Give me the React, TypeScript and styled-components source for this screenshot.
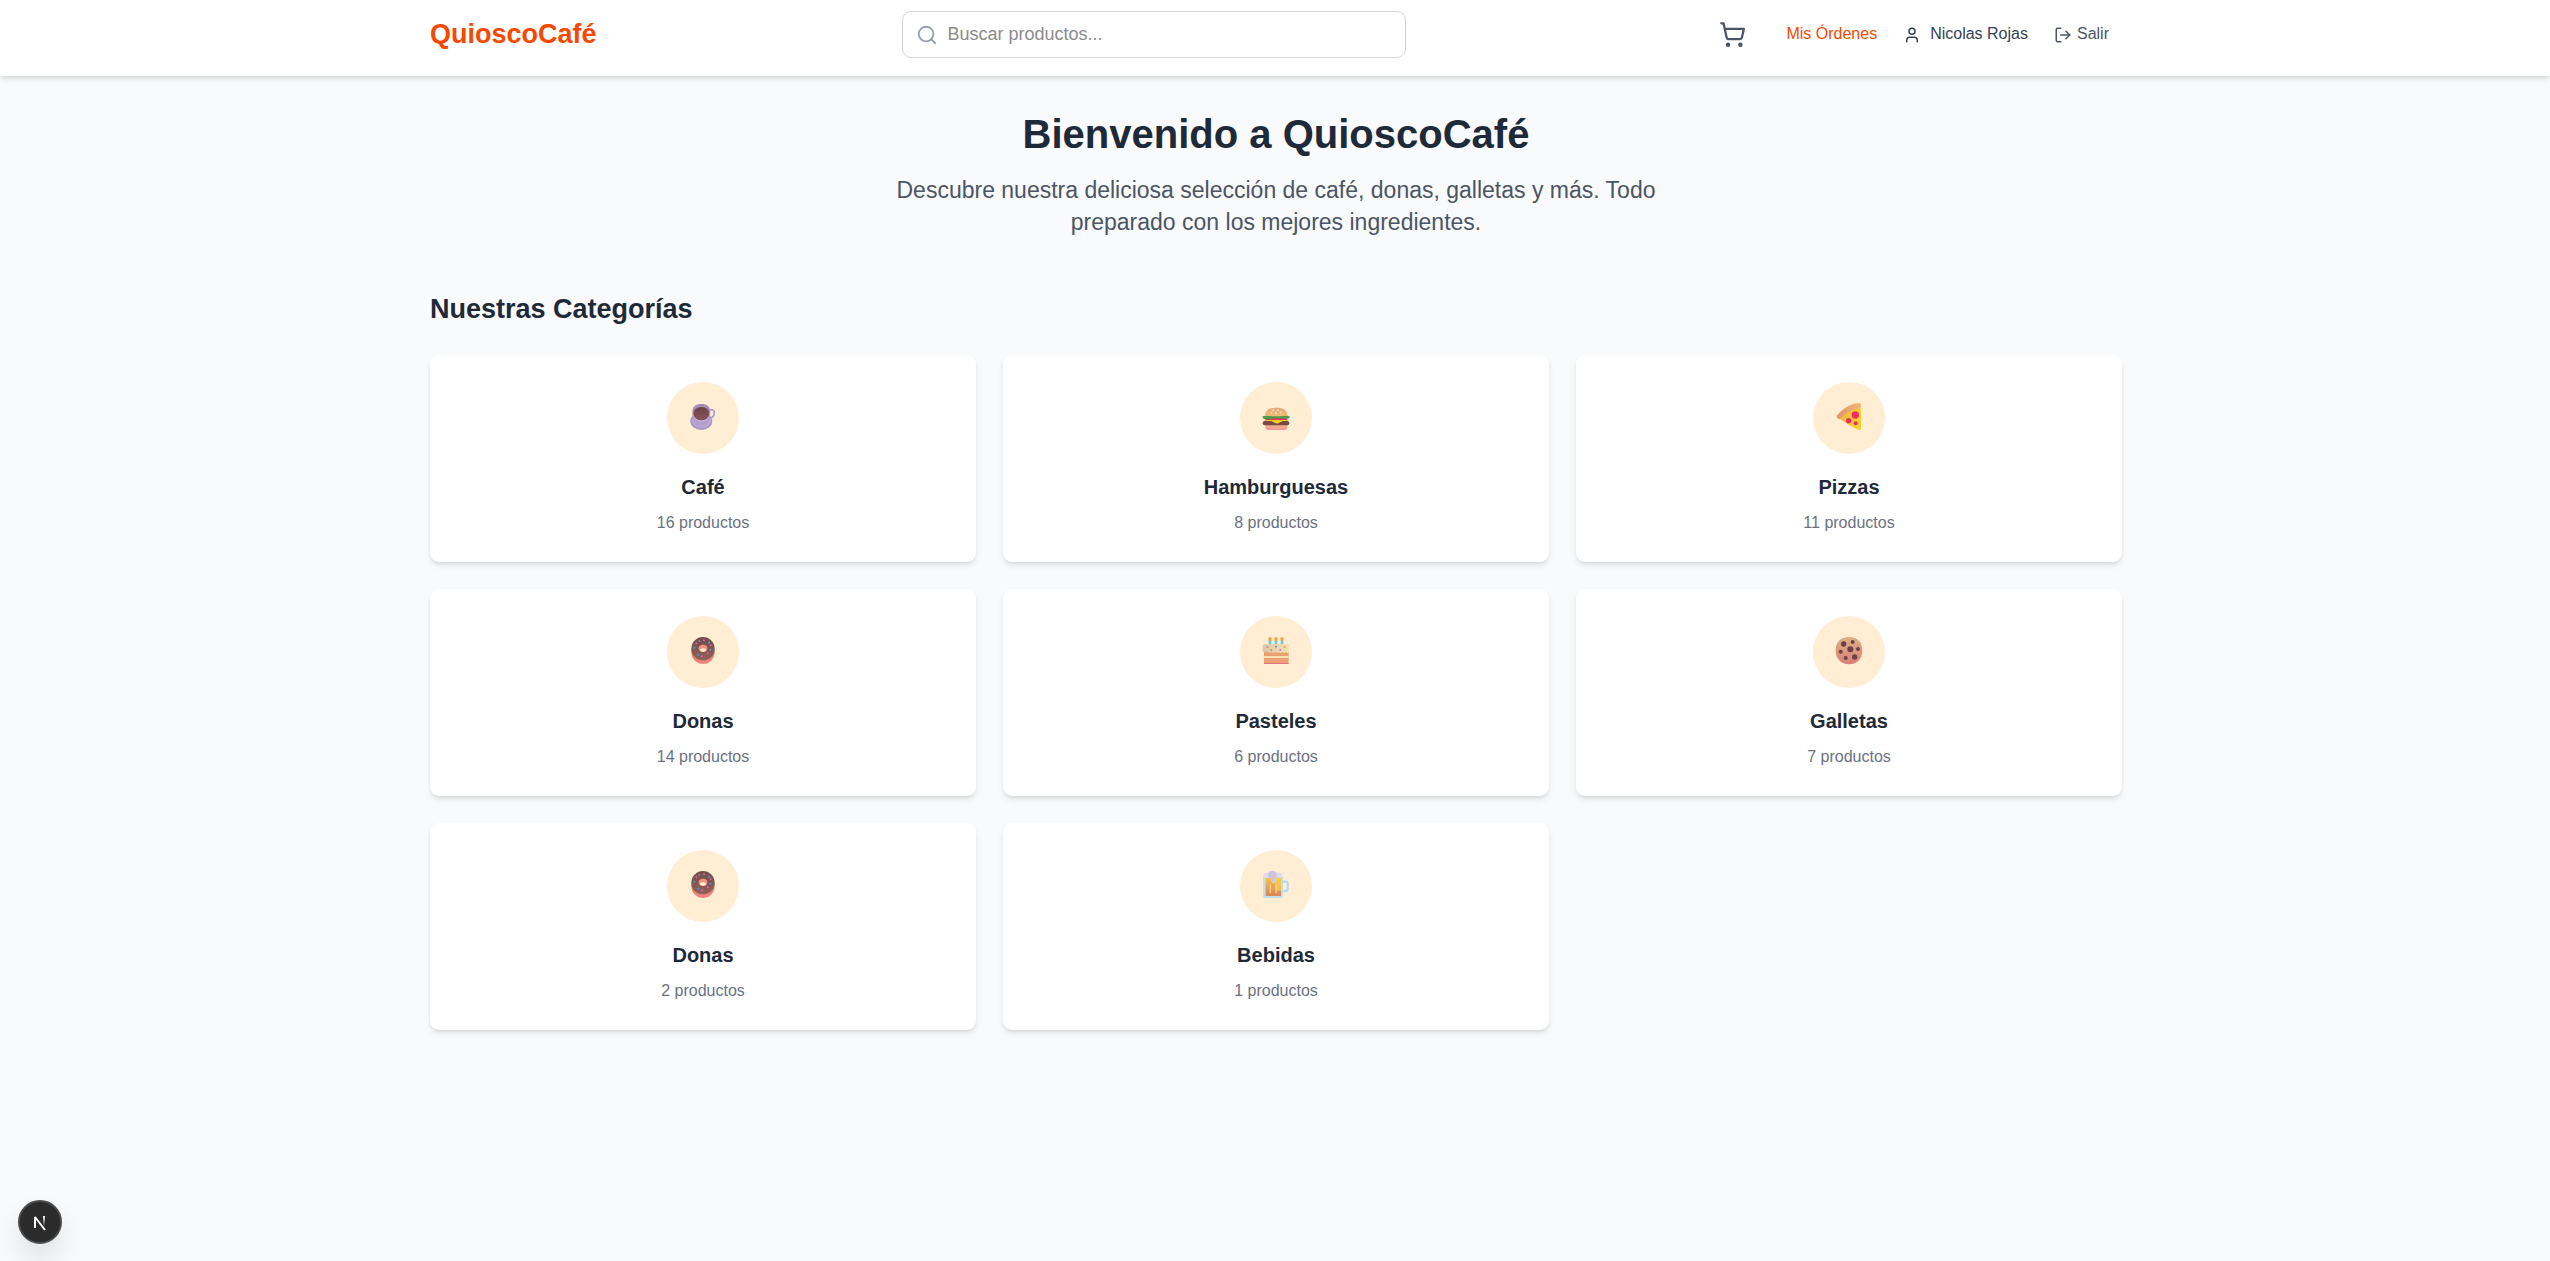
import React from "react";
import styled, { createGlobalStyle } from "styled-components";
import { LogOut, Search, ShoppingCart, User } from "lucide-react";

const GlobalStyle = createGlobalStyle`
  *, *::before, *::after { box-sizing: border-box; }
  html { font-size: 18px; }
  body {
    margin: 0;
    background: #f9fafb;
    color: #171717;
    font-family: Arial, "Liberation Sans", Helvetica, sans-serif;
  }
  h1, h2, h3, p, ul { margin: 0; padding: 0; }
  a { color: inherit; text-decoration: none; }
  svg { display: block; flex-shrink: 0; }
`;

const Page = styled.div`
  min-height: 100vh;
`;

const Container = styled.div`
  width: 100%;
  max-width: 1728px;
  margin: 0 auto;
  padding: 0 17px 0 19px;
`;

const Header = styled.header`
  position: relative;
  background: #fff;
  padding: 11px 0 18px;
  box-shadow: 0 4px 6px -1px rgba(0, 0, 0, 0.1), 0 2px 4px -2px rgba(0, 0, 0, 0.1);
`;

const HeaderRow = styled(Container)`
  display: flex;
  align-items: center;
  justify-content: space-between;
`;

const Brand = styled.a`
  padding-bottom: 2px;
  color: #f54900;
  font-size: 27px;
  line-height: 36px;
  font-weight: 700;
`;

const SearchBox = styled.label`
  display: flex;
  align-items: center;
  gap: 10px;
  width: 100%;
  max-width: 504px;
  height: 47px;
  padding: 0 13px;
  border: 1px solid #d1d5dc;
  border-radius: 9px;
  color: #99a1af;
`;

const SearchInput = styled.input`
  flex: 1;
  min-width: 0;
  height: 27px;
  padding: 0;
  border: 0;
  outline: 0;
  background: transparent;
  color: #171717;
  font: inherit;
  &::placeholder { color: #8b8b8b; opacity: 1; }
`;

const Nav = styled.nav`
  display: flex;
  align-items: center;
  gap: 18px;
`;

const CartButton = styled.button`
  padding: 9px;
  border: 0;
  background: none;
  color: #4a5565;
  cursor: pointer;
`;

const Account = styled.div`
  display: flex;
  align-items: center;
  gap: 13px;
  font-size: 16px;
  line-height: 22px;
`;

const NavText = styled.span`
  display: block;
  padding-bottom: 2px;
`;

const OrdersLink = styled.a`
  padding: 0 13px;
  color: #f54900;
`;

const UserName = styled.div`
  display: flex;
  align-items: center;
  gap: 9px;
  color: #364153;
`;

const LogoutButton = styled.button`
  display: flex;
  align-items: center;
  gap: 5px;
  padding: 0 13px;
  border: 0;
  background: none;
  color: #4a5565;
  font: inherit;
  cursor: pointer;
`;

const Main = styled(Container).attrs({ as: "main" })`
  padding-top: 36px;
  padding-bottom: 36px;
`;

const Hero = styled.section`
  display: flex;
  flex-direction: column;
  align-items: center;
  gap: 17px;
  margin-bottom: 54px;
  text-align: center;
`;

const Title = styled.h1`
  color: #1e2939;
  font-size: 40px;
  line-height: 45px;
  font-weight: 700;
`;

const Lead = styled.p`
  max-width: 765px;
  color: #4a5565;
  font-size: 23px;
  line-height: 32px;
`;

const SectionTitle = styled.h2`
  margin-bottom: 29px;
  color: #1e2939;
  font-size: 27px;
  line-height: 34px;
  font-weight: 700;
`;

const Grid = styled.ul`
  display: grid;
  grid-template-columns: repeat(3, minmax(0, 1fr));
  gap: 27px;
  list-style: none;
`;

const Card = styled.a`
  display: flex;
  flex-direction: column;
  align-items: center;
  padding: 27px 27px 28px;
  border-radius: 9px;
  background: #fff;
  box-shadow: 0 4px 6px -1px rgba(0, 0, 0, 0.1), 0 2px 4px -2px rgba(0, 0, 0, 0.1);
`;

const IconCircle = styled.span`
  display: grid;
  place-items: center;
  width: 72px;
  height: 72px;
  margin-bottom: 18px;
  border-radius: 50%;
  background: #ffedd4;
`;

const CardTitle = styled.h3`
  margin-bottom: 10px;
  color: #1e2939;
  font-size: 20px;
  line-height: 30px;
  font-weight: 700;
`;

const CardCount = styled.p`
  color: #6a7282;
  font-size: 16px;
  line-height: 22px;
`;

const DevBadge = styled.button`
  position: fixed;
  left: 18px;
  bottom: 17px;
  display: grid;
  place-items: center;
  width: 44px;
  height: 44px;
  padding: 0;
  border: 2px solid #4b4b4b;
  border-radius: 50%;
  background: #2b2b2b;
  box-shadow: 0 16px 32px -8px rgba(0, 0, 0, 0.24);
  cursor: pointer;
`;

const Glyph = styled.svg.attrs({ viewBox: "0 0 84 84", "aria-hidden": true })`
  width: 28px;
  height: 28px;
  overflow: visible;
`;

function Gradient({ id, from, to, across }: { id: string; from: string; to: string; across?: boolean }) {
  return (
    <linearGradient id={id} x1="0" y1="0" x2={across ? "1" : "0"} y2={across ? "0" : "1"}>
      <stop offset="0" stopColor={from} />
      <stop offset="1" stopColor={to} />
    </linearGradient>
  );
}

function Coffee() {
  return (
    <Glyph>
      <defs>
        <Gradient id="cup" from="#a590b8" to="#b79fd6" />
        <Gradient id="brew" from="#6b4348" to="#8a5459" />
      </defs>
      <ellipse cx="37" cy="51" rx="33" ry="27" fill="#a896c4" />
      <ellipse cx="38" cy="49" rx="29" ry="23" fill="#bba8d6" />
      <path d="M60 20c9-6 17-2 16 8-1 8-7 14-16 16" fill="none" stroke="#ad9cc8" strokeWidth="5" />
      <path d="M10 24C10 8 20 0 37 0s27 8 27 24c0 24-8 43-27 43S10 48 10 24Z" fill="url(#cup)" />
      <ellipse cx="37" cy="28" rx="26" ry="25" fill="#cbb9df" />
      <ellipse cx="37" cy="26" rx="25" ry="23" fill="#8c7196" />
      <ellipse cx="37" cy="29" rx="23" ry="20" fill="url(#brew)" />
      <path d="M18 12c10-7 28-7 38 0" fill="none" stroke="#b5a0c8" strokeWidth="3" />
    </Glyph>
  );
}

function Burger() {
  return (
    <Glyph>
      <defs>
        <Gradient id="bun" from="#dfa77c" to="#f3bd72" />
        <Gradient id="base" from="#f5b786" to="#ef9b97" />
      </defs>
      <path d="M10 58h66v11q0 9-9 9H19q-9 0-9-9Z" fill="url(#base)" />
      <path d="M10 40h66v13H10Z" fill="#e8315f" />
      <path d="M10 48h66v6H10Z" fill="#f6cf22" />
      <rect x="2" y="51" width="80" height="13" rx="6" fill="#7a4b45" />
      <path d="M26 50h38l-19 9Z" fill="#f6cf22" />
      <path d="M2 37c13-6 67-6 80 0 3 4 0 8-7 6-8 4-14 2-19-1-8 3-16 2-21-1-7 7-13 6-18 3-8 4-17 0-15-7Z" fill="#4f9b48" />
      <path d="M9 34C10 18 24 11 43 11s33 7 33 23c-12 4-54 4-67 0Z" fill="url(#bun)" />
      <g fill="#ffe3b8">
        <circle cx="34" cy="19" r="3" />
        <circle cx="48" cy="18" r="3" />
        <circle cx="28" cy="26" r="3" />
        <circle cx="42" cy="28" r="3" />
        <circle cx="56" cy="25" r="3" />
      </g>
    </Glyph>
  );
}

function Pizza() {
  return (
    <Glyph>
      <defs>
        <Gradient id="cheese" from="#f2b83b" to="#fbd22e" across />
        <Gradient id="crust" from="#e2926e" to="#f2b873" across />
      </defs>
      <path d="M12 43C28 24 48 12 75 11q3 0 3 4v58q0 7-7 5C52 69 31 57 12 43Z" fill="url(#cheese)" />
      <path d="M6 35C22 14 46-1 72-3q6 0 6 6v5q0 5-6 6C49 17 31 28 17 43q-4 4-8 1-6-4-3-9Z" fill="url(#crust)" />
      <circle cx="61" cy="33" r="11" fill="#ee2a68" />
      <circle cx="41" cy="50" r="8" fill="#ee2a68" />
      <circle cx="62" cy="58" r="6" fill="#ee2a68" />
    </Glyph>
  );
}

function Donut() {
  return (
    <Glyph>
      <defs>
        <Gradient id="dough" from="#c47a68" to="#f58480" />
        <Gradient id="glaze" from="#744a45" to="#946057" />
      </defs>
      <ellipse cx="42" cy="42" rx="35" ry="36" fill="url(#dough)" />
      <ellipse cx="42" cy="32" rx="35" ry="35" fill="url(#glaze)" />
      <ellipse cx="42" cy="31" rx="13" ry="11" fill="#ee9480" />
      <ellipse cx="42" cy="36" rx="9" ry="5" fill="#ffedd4" />
      <g fill="#46a0dc">
        <circle cx="31" cy="9" r="3" />
        <circle cx="60" cy="14" r="3" />
        <circle cx="16" cy="29" r="3" />
        <circle cx="64" cy="35" r="3" />
        <circle cx="28" cy="50" r="3" />
      </g>
      <g fill="#d667b5">
        <circle cx="45" cy="7" r="3" />
        <circle cx="22" cy="16" r="3" />
        <circle cx="65" cy="22" r="3" />
        <circle cx="56" cy="46" r="3" />
        <circle cx="39" cy="55" r="3" />
      </g>
    </Glyph>
  );
}

function Cake() {
  return (
    <Glyph>
      <defs>
        <Gradient id="sponge" from="#e7a06c" to="#eea078" />
        <Gradient id="icing" from="#dcc6a6" to="#f6e2b4" across />
      </defs>
      {[24, 42, 60].map((x) => (
        <g key={x}>
          <rect x={x - 4} y="6" width="8" height="16" fill="#62cfe8" />
          <ellipse cx={x} cy="3" rx="5" ry="6" fill="#f5a034" />
        </g>
      ))}
      <path d="M6 40h74v36q0 2-2 2H8q-2 0-2-2Z" fill="url(#sponge)" />
      <rect x="6" y="54" width="74" height="6" fill="#fbe0b2" />
      <rect x="6" y="75" width="74" height="3" fill="#dc7182" />
      <path d="M2 26q0-8 8-8h64q7 0 7 8v17q-5 4-10-1-5 6-10 0-6 6-11 0-5 6-10 0-6 6-11 0-5 6-10 0Q2 45 2 38Z" fill="url(#icing)" />
      <g>
        <circle cx="16" cy="27" r="3" fill="#cf79b0" />
        <circle cx="28" cy="36" r="3" fill="#e28a48" />
        <circle cx="42" cy="26" r="3" fill="#5b97cf" />
        <circle cx="55" cy="36" r="3" fill="#d472c0" />
        <circle cx="68" cy="27" r="3" fill="#e3a053" />
      </g>
    </Glyph>
  );
}

function Cookie() {
  return (
    <Glyph>
      <defs>
        <Gradient id="biscuit" from="#dcb183" to="#dc7f76" />
      </defs>
      <path d="M42-3c25 0 40 15 40 40S67 79 42 79 2 62 2 37 17-3 42-3Z" fill="url(#biscuit)" />
      <g fill="#6d4147">
        <circle cx="26" cy="18" r="8" />
        <circle cx="53" cy="12" r="6" />
        <circle cx="46" cy="34" r="9" />
        <circle cx="69" cy="33" r="6" />
        <circle cx="17" cy="41" r="6" />
        <circle cx="32" cy="60" r="6" />
        <circle cx="59" cy="57" r="8" />
      </g>
    </Glyph>
  );
}

function Beer() {
  return (
    <Glyph>
      <defs>
        <Gradient id="ale" from="#f8c441" to="#d98458" />
      </defs>
      <path d="M60 29h11q6 0 6 6v16q0 6-6 6H60" fill="none" stroke="#b7dcec" strokeWidth="7" />
      <path d="M3 14h60v57q0 7-7 7H10q-7 0-7-7Z" fill="#b9e1f1" />
      <path d="M11 15h46v57H11Z" fill="url(#ale)" />
      <path d="M40 18h17v38H40Z" fill="#fbd84a" opacity="0.6" />
      <rect x="23" y="36" width="4" height="28" rx="2" fill="#f8cd92" />
      <rect x="40" y="36" width="4" height="28" rx="2" fill="#f8cd92" />
      <path d="M4 17C2 7 9 1 18 3 22-5 38-5 43 3c9-4 19 2 17 14H42v10c0 9-14 9-14 0v-8Z" fill="#e0d8ec" />
      <path d="M18 7c2-14 24-14 26 0 1 8-4 11-4 18 0 7-10 7-11 0 0-7-12-9-11-18Z" fill="#cdc3df" />
    </Glyph>
  );
}

const categories = [
  { name: "Café", count: 16, Icon: Coffee },
  { name: "Hamburguesas", count: 8, Icon: Burger },
  { name: "Pizzas", count: 11, Icon: Pizza },
  { name: "Donas", count: 14, Icon: Donut },
  { name: "Pasteles", count: 6, Icon: Cake },
  { name: "Galletas", count: 7, Icon: Cookie },
  { name: "Donas", count: 2, Icon: Donut },
  { name: "Bebidas", count: 1, Icon: Beer },
];

export default function App() {
  return (
    <Page>
      <GlobalStyle />
      <Header>
        <HeaderRow>
          <Brand href="#">QuioscoCafé</Brand>
          <SearchBox>
            <Search size={22} aria-hidden="true" />
            <SearchInput type="text" placeholder="Buscar productos..." aria-label="Buscar productos" />
          </SearchBox>
          <Nav>
            <CartButton type="button" aria-label="Carrito">
              <ShoppingCart size={27} />
            </CartButton>
            <Account>
              <OrdersLink href="#ordenes">
                <NavText>Mis Órdenes</NavText>
              </OrdersLink>
              <UserName>
                <User size={18} />
                <NavText>Nicolas Rojas</NavText>
              </UserName>
              <LogoutButton type="button">
                <LogOut size={18} />
                <NavText>Salir</NavText>
              </LogoutButton>
            </Account>
          </Nav>
        </HeaderRow>
      </Header>

      <Main>
        <Hero>
          <Title>Bienvenido a QuioscoCafé</Title>
          <Lead>
            Descubre nuestra deliciosa selección de café, donas, galletas y más. Todo preparado con los mejores
            ingredientes.
          </Lead>
        </Hero>
        <section>
          <SectionTitle>Nuestras Categorías</SectionTitle>
          <Grid>
            {categories.map(({ name, count, Icon }, index) => (
              <li key={index}>
                <Card href="#categoria">
                  <IconCircle>
                    <Icon />
                  </IconCircle>
                  <CardTitle>{name}</CardTitle>
                  <CardCount>{count} productos</CardCount>
                </Card>
              </li>
            ))}
          </Grid>
        </section>
      </Main>

      <DevBadge type="button" aria-label="Next.js">
        <svg width="18" height="18" viewBox="0 0 18 18" fill="none" aria-hidden="true">
          <defs>
            <linearGradient id="stemFade" x1="0" y1="3" x2="0" y2="12" gradientUnits="userSpaceOnUse">
              <stop stopColor="#fff" />
              <stop offset="1" stopColor="#fff" stopOpacity="0.1" />
            </linearGradient>
          </defs>
          <path d="M4 15V4L14 17" stroke="#fff" strokeWidth="2" strokeLinejoin="bevel" />
          <path d="M13 3v10" stroke="url(#stemFade)" strokeWidth="2" />
        </svg>
      </DevBadge>
    </Page>
  );
}
